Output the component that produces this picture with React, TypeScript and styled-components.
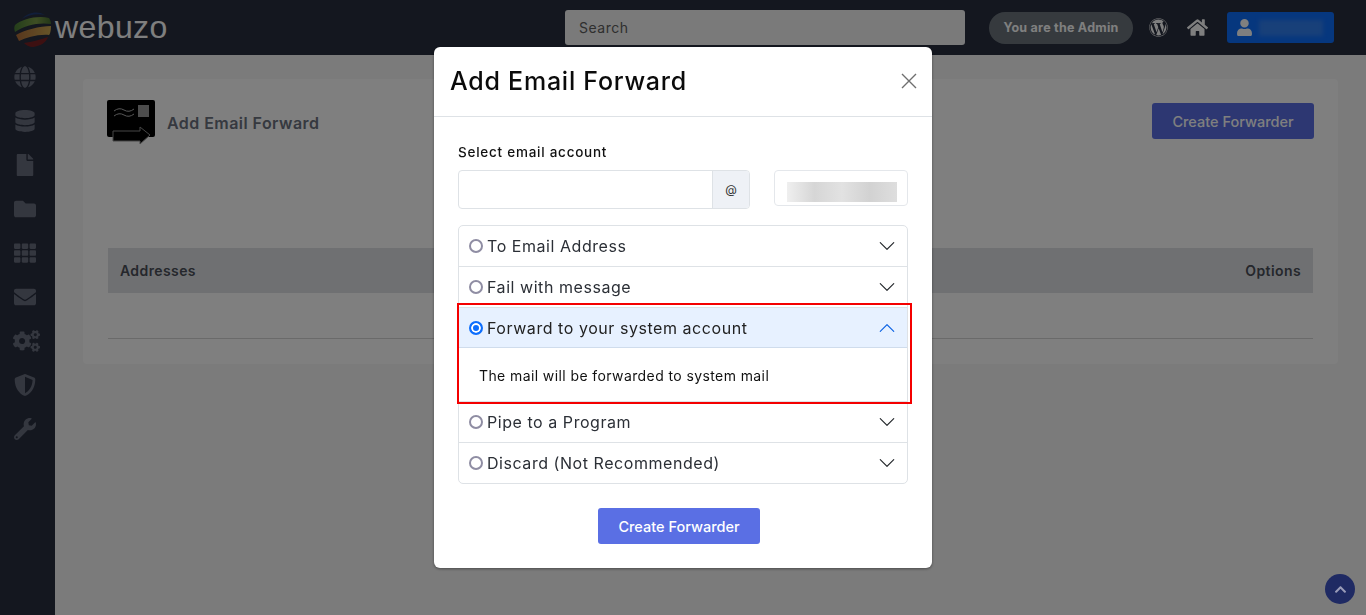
import React from 'react';
import styled, { createGlobalStyle } from 'styled-components';
import {
  FaGlobe, FaDatabase, FaFile, FaFolder, FaTh, FaEnvelope, FaCogs, FaShieldAlt, FaWrench,
  FaWordpress, FaHome, FaUser, FaChevronUp,
} from 'react-icons/fa';

const GlobalStyle = createGlobalStyle`
  html, body { margin: 0; height: 100%; overflow: hidden; }
  body { font-family: Inter, "Open Sans", sans-serif; background: #f6f6f6; }
  * { box-sizing: border-box; }
`;

const Page = styled.div`
  height: 615px;
  display: flex;
  flex-direction: column;
`;

const TopBar = styled.header`
  height: 55px;
  flex: none;
  display: flex;
  align-items: center;
  background: #282e3e;
  padding-left: 14px;
`;

const Logo = styled.div`
  display: flex;
  align-items: center;
  width: 551px;
  color: #fff;
  font-family: "Liberation Sans", sans-serif;
  font-size: 32px;
  letter-spacing: 0.4px;
  svg { margin: 3px 3px 0 0; opacity: 0.85; }
`;

const Search = styled.div`
  width: 400px;
  height: 35px;
  margin-bottom: 1px;
  padding-left: 14px;
  display: flex;
  align-items: center;
  background: #f4f4f4;
  border-radius: 3px;
  color: #5e5e5e;
  font-size: 14px;
  letter-spacing: 0.5px;
`;

const AdminPill = styled.div`
  width: 144px;
  height: 32px;
  margin-left: 24px;
  border-radius: 16px;
  display: flex;
  align-items: center;
  justify-content: center;
  background: #6c757d;
  color: #fff;
  font-size: 12.5px;
  font-weight: 700;
  letter-spacing: 0.25px;
`;

const TopIcon = styled.div`
  width: 39px;
  margin-left: ${p => p.$ml}px;
  display: flex;
  justify-content: center;
  color: #fff;
  font-size: ${p => p.$size}px;
`;

const UserButton = styled.div`
  width: 107px;
  height: 31px;
  margin-left: 10px;
  padding-left: 9px;
  display: flex;
  align-items: center;
  gap: 6px;
  background: #0d6efd;
  border-radius: 3px;
  color: #fff;
  font-size: 17px;
`;

const BlurName = styled.span`
  width: 64px;
  height: 16px;
  background: #3180f2;
  filter: blur(2px);
`;

const Body = styled.div`
  flex: 1;
  display: flex;
  min-height: 0;
`;

const Sidebar = styled.nav`
  width: 55px;
  flex: none;
  background: #282e3e;
  padding-top: 11px;
  display: flex;
  flex-direction: column;
  align-items: center;
  padding-right: 5px;
  gap: 22px;
  color: #686e7e;
  font-size: 22px;
  svg { display: block; }
`;

const CogsIcon = styled(FaCogs)`
  width: 27px;
  height: 22px;
  margin-left: 2px;
`;

const Content = styled.main`
  flex: 1;
  padding: 24px 28px 0;
  background: #f6f6f6;
`;

const Card = styled.section`
  height: 285px;
  padding: 21px 24px 0;
  background: #fff;
  border-radius: 4px;
`;

const CardHead = styled.div`
  display: flex;
  align-items: flex-start;
  justify-content: space-between;
  height: 149px;
`;

const CardTitle = styled.div`
  display: flex;
  align-items: center;
  gap: 12px;
  font-size: 16px;
  font-weight: 600;
  letter-spacing: 0.45px;
  color: #6c7280;
  svg { display: block; }
`;

const PrimaryButton = styled.button`
  width: 162px;
  height: 36px;
  border: none;
  border-radius: 3px;
  background: #5a6fe4;
  color: #fff;
  font: 500 14.5px Inter, sans-serif;
  margin-top: ${p => p.$mt || 0}px;
  margin-right: ${p => p.$mr || 0}px;
`;

const TableHead = styled.div`
  height: 45px;
  margin: -1px 1px 0;
  display: flex;
  align-items: center;
  justify-content: space-between;
  padding: 0 12px;
  background: #dfe1e5;
  font-size: 14px;
  font-weight: 600;
  letter-spacing: 0.4px;
  color: #4b4f58;
`;

const TableRow = styled.div`
  height: 46px;
  margin: 0 1px;
  border-bottom: 1px solid #d5d5d5;
`;

const Backdrop = styled.div`
  position: fixed;
  inset: 0;
  background: rgba(0, 0, 0, 0.5);
`;

const ScrollTop = styled.div`
  position: fixed;
  right: 11px;
  bottom: 11px;
  width: 30px;
  height: 30px;
  border-radius: 50%;
  display: flex;
  align-items: center;
  justify-content: center;
  background: #1f2a63;
  color: #9a9cb8;
  font-size: 13px;
`;

const Modal = styled.div`
  position: fixed;
  top: 47px;
  left: 434px;
  width: 498px;
  height: 521px;
  background: #fff;
  border-radius: 6px;
  box-shadow: 0 1px 3px rgba(0, 0, 0, 0.4);
`;

const ModalHead = styled.div`
  height: 70px;
  padding: 0 15px 1px 16px;
  display: flex;
  align-items: center;
  justify-content: space-between;
  border-bottom: 1px solid #dee2e6;
`;

const ModalTitle = styled.h2`
  margin: 0;
  font-size: 25px;
  font-weight: 500;
  letter-spacing: 0.75px;
  color: #0b0b0b;
`;

const CloseIcon = styled.svg`
  display: block;
`;

const ModalBody = styled.div`
  padding: 25px 24px 0;
`;

const Label = styled.div`
  height: 20px;
  margin-bottom: 8px;
  line-height: 20px;
  font-size: 13.5px;
  font-weight: 500;
  letter-spacing: 0.75px;
  color: #111;
`;

const FieldRow = styled.div`
  display: flex;
  align-items: flex-start;
  justify-content: space-between;
`;

const InputGroup = styled.div`
  width: 292px;
  height: 39px;
  display: flex;
  border: 1px solid #dee2e6;
  border-radius: 4px;
`;

const TextInput = styled.input`
  flex: 1;
  min-width: 0;
  border: none;
  outline: none;
  background: transparent;
`;

const AtAddon = styled.span`
  width: 37px;
  display: flex;
  align-items: center;
  justify-content: center;
  background: #eef1f6;
  border-left: 1px solid #dee2e6;
  border-radius: 0 3px 3px 0;
  font-size: 12px;
  color: #333;
`;

const DomainBox = styled.div`
  width: 134px;
  height: 36px;
  padding: 11px 10px 0 12px;
  border: 1px solid #e4e7eb;
  border-radius: 4px;
  overflow: hidden;
`;

const BlurDomain = styled.div`
  height: 20px;
  background: #dcdcdc;
  background-image: linear-gradient(90deg, #efefef, #d6d6d6 25%, #e2e2e2 50%, #d2d2d2 75%, #dedede);
`;

const Accordion = styled.div`
  margin-top: ${p => p.$mt}px;
  border: 1px solid #dee2e6;
  border-radius: 5px;
`;

const Item = styled.div`
  position: relative;
  & + & { border-top: 1px solid #dee2e6; }
`;

const ItemHead = styled.div`
  height: 40px;
  padding: 0 11px 0 10px;
  display: flex;
  align-items: center;
  gap: 4px;
  background: ${p => (p.$active ? '#e7f1ff' : 'transparent')};
  box-shadow: ${p => (p.$active ? 'inset 0 -1px 0 #cfdcec' : 'none')};
  color: ${p => (p.$active ? '#222' : '#2b2f36')};
  font-size: 16px;
  letter-spacing: 0.55px;
`;

const Radio = styled.span`
  width: 14px;
  height: 14px;
  flex: none;
  border-radius: 50%;
  border: 2px solid ${p => (p.$on ? '#0d6efd' : '#8f8da3')};
  background: ${p => (p.$on ? '#0d6efd' : '#fff')};
  box-shadow: ${p => (p.$on ? 'inset 0 0 0 2px #fff' : 'none')};
`;

const ItemLabel = styled.span`
  flex: 1;
`;

const Chevron = styled.svg`
  display: block;
  transform: ${p => (p.$up ? 'rotate(180deg)' : 'none')};
  color: ${p => (p.$up ? '#0c63e4' : '#212529')};
`;

const ItemBody = styled.div`
  height: 53px;
  padding: 1px 20px 0;
  display: flex;
  align-items: center;
  font-size: 14px;
  letter-spacing: 0.4px;
  color: #111;
`;

// red annotation drawn on top of the open item
const Highlight = styled.div`
  position: absolute;
  z-index: 1;
  top: -5px;
  left: -2px;
  right: -5px;
  bottom: -3px;
  border: 2px solid #f40000;
  pointer-events: none;
`;

const ModalFoot = styled.div`
  display: flex;
  justify-content: center;
`;

const items = [
  { label: 'To Email Address' },
  { label: 'Fail with message' },
  { label: 'Forward to your system account', active: true, body: 'The mail will be forwarded to system mail' },
  { label: 'Pipe to a Program' },
  { label: 'Discard (Not Recommended)' },
];

const GlobeLogo = () => (
  <svg width="38" height="38" viewBox="0 0 38 38">
    <defs>
      <linearGradient id="greenBand" x1="0" x2="1" y1="0" y2="0">
        <stop offset="0" stopColor="#4f8a35" />
        <stop offset="0.6" stopColor="#8cb04a" />
        <stop offset="1" stopColor="#4d7a2e" />
      </linearGradient>
      <linearGradient id="goldBand" x1="0" x2="1" y1="0" y2="0">
        <stop offset="0" stopColor="#c9793a" />
        <stop offset="1" stopColor="#e8bf55" />
      </linearGradient>
    </defs>
    <path d="M8 9 C13 3 23 0 31 5 C23 3 14 5 8 9 Z" fill="#23407f" />
    <path d="M1 15 C8 9 24 5 35 8 C37 11 37 13 37 14 C26 12 10 15 1 22 C0 19 0 17 1 15 Z" fill="url(#greenBand)" />
    <path d="M2 25 C10 20 26 16 37 16 C37 21 36 24 35 25 C24 24 12 28 5 31 C4 29 3 27 2 25 Z" fill="url(#goldBand)" />
    <path d="M10 33 C18 32 28 29 34 27 C32 33 26 36 19 37 C15 37 12 35 10 33 Z" fill="#8a1f1f" />
  </svg>
);

const ForwardIcon = () => (
  <svg width="48" height="45" viewBox="0 0 48 45">
    <rect x="0" y="0" width="48" height="37" rx="2" fill="#000" />
    <rect x="31" y="5" width="11" height="12" fill="#9a9a9a" />
    <path d="M7 11 q5 -4 10 -1 t10 -1 M7 16 q5 -4 10 -1 t10 -1" fill="none" stroke="#b0b0b0" strokeWidth="1" />
    <path d="M6 31 H33 V27 L43 35 L33 44 V41 H6 Z" fill="#000" stroke="#8c8c8c" strokeWidth="1" />
  </svg>
);

const App: React.FC = () => (
  <Page>
    <GlobalStyle />
    <TopBar>
      <Logo><GlobeLogo />webuzo</Logo>
      <Search>Search</Search>
      <AdminPill>You are the Admin</AdminPill>
      <TopIcon $ml={6} $size={19}><FaWordpress /></TopIcon>
      <TopIcon $ml={0} $size={21}><FaHome /></TopIcon>
      <UserButton><FaUser /><BlurName /></UserButton>
    </TopBar>
    <Body>
      <Sidebar>
        <FaGlobe /><FaDatabase /><FaFile /><FaFolder /><FaTh /><FaEnvelope /><CogsIcon /><FaShieldAlt /><FaWrench />
      </Sidebar>
      <Content>
        <Card>
          <CardHead>
            <CardTitle><ForwardIcon />Add Email Forward</CardTitle>
            <PrimaryButton $mt={3} $mr={0}>Create Forwarder</PrimaryButton>
          </CardHead>
          <TableHead><span>Addresses</span><span>Options</span></TableHead>
          <TableRow />
        </Card>
      </Content>
    </Body>
    <Backdrop />
    <ScrollTop><FaChevronUp /></ScrollTop>
    <Modal>
      <ModalHead>
        <ModalTitle>Add Email Forward</ModalTitle>
        <CloseIcon width="16" height="16" viewBox="0 0 16 16">
          <path d="M1 1 L15 15 M15 1 L1 15" stroke="#6f6f6f" strokeWidth="1.4" />
        </CloseIcon>
      </ModalHead>
      <ModalBody>
        <Label>Select email account</Label>
        <FieldRow>
          <InputGroup><TextInput /><AtAddon>@</AtAddon></InputGroup>
          <DomainBox><BlurDomain /></DomainBox>
        </FieldRow>
        <Accordion $mt={16}>
          {items.map(item => (
            <Item key={item.label}>
              <ItemHead $active={item.active}>
                <Radio $on={item.active} />
                <ItemLabel>{item.label}</ItemLabel>
                <Chevron $up={item.active} width="18" height="18" viewBox="0 0 16 16" fill="currentColor">
                  <path d="M1.646 4.646a.5.5 0 0 1 .708 0L8 10.293l5.646-5.647a.5.5 0 0 1 .708.708l-6 6a.5.5 0 0 1-.708 0l-6-6a.5.5 0 0 1 0-.708z" />
                </Chevron>
              </ItemHead>
              {item.body && <ItemBody>{item.body}</ItemBody>}
              {item.active && <Highlight />}
            </Item>
          ))}
        </Accordion>
        <ModalFoot>
          <PrimaryButton $mt={24} $mr={8}>Create Forwarder</PrimaryButton>
        </ModalFoot>
      </ModalBody>
    </Modal>
  </Page>
);

export default App;
